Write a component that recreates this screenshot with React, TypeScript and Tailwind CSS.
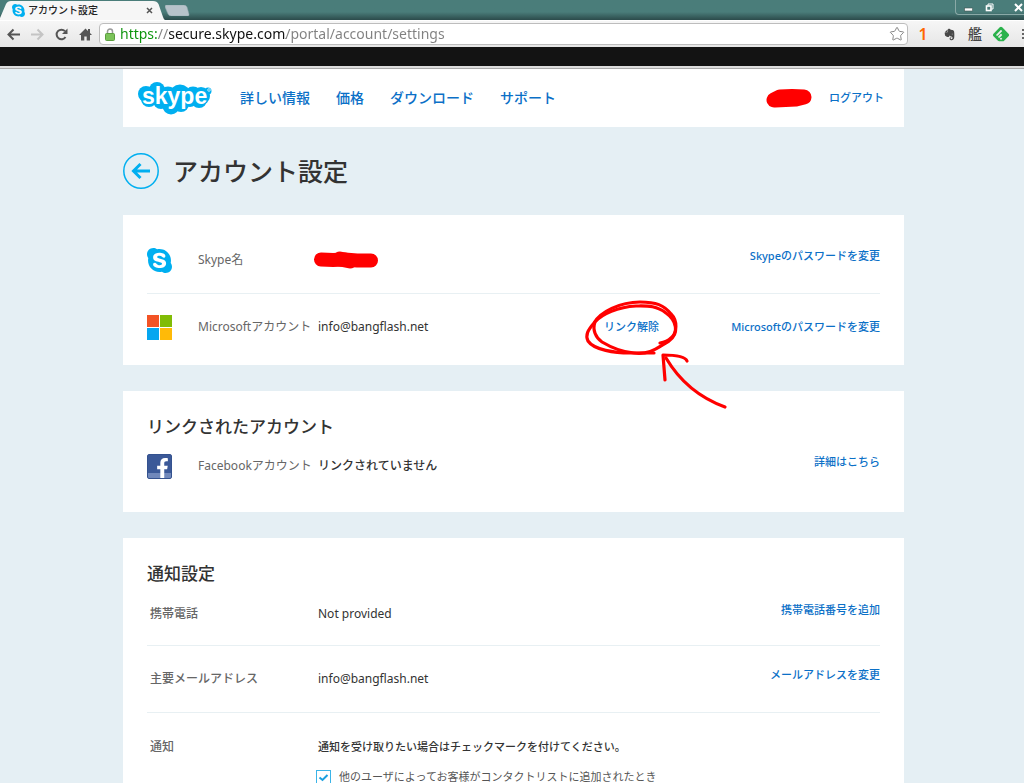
import React from "react";
import { FaSkype, FaFacebookF, FaEvernote } from "react-icons/fa";
import { SiFeedly } from "react-icons/si";
import { Star } from "lucide-react";

function BrowserTabs() {
  return (
    <div className="flex h-5 shrink-0 items-start bg-linear-to-b from-[#4a7d7a] from-60% to-[#2c4b4b]">
      <div className="relative flex h-5 w-[165px] items-center pr-3 pl-3">
        <svg className="absolute inset-0" width="165" height="20" viewBox="0 0 165 20" aria-hidden="true">
          <path d="M0 20V18L6 4Q7.500 1 11 1H153Q157 1 158.500 4L163 17Q164 20 165 20Z" fill="#f6f6f6" />
        </svg>
        <FaSkype className="relative h-[15px] w-[13px] text-[#00aff0]" />
        <span className="relative ml-[3px] grow text-[10px] leading-4 font-medium text-[#222]">アカウント設定</span>
        <button type="button" aria-label="閉じる" className="relative">
          <svg width="7" height="7" viewBox="0 0 7 7" stroke="#555" strokeWidth="1.500">
            <path d="M1 1l5 5M6 1L1 6" />
          </svg>
        </button>
      </div>
      <button type="button" aria-label="新しいタブ" className="mt-[5px]">
        <svg width="25" height="11" viewBox="0 0 25 11">
          <path d="M1 0H19Q21 0 22 2L24 9Q24.500 11 23 11H6Q4 11 3 9L0 2Q0 0 1 0Z" fill="#b7c3ca" stroke="#8fa5aa" strokeWidth=".5" />
        </svg>
      </button>
      <div className="ml-auto flex h-[15px] w-[69px] items-center gap-3 rounded-bl border-b border-l border-[#8aa9a7] pr-px pl-2">
        <button type="button" aria-label="最小化">
          <svg width="9" height="9" viewBox="0 0 9 9">
            <rect x=".5" y="5" width="8" height="3" fill="#fff" stroke="#405553" strokeWidth=".6" />
          </svg>
        </button>
        <button type="button" aria-label="元に戻す">
          <svg width="9" height="9" viewBox="0 0 9 9" fill="none" stroke="#fff" strokeWidth="1.600">
            <path d="M3 2.500V1H8V6H6.500" strokeWidth="1" />
            <rect x="1.500" y="3" width="4.500" height="4.500" />
          </svg>
        </button>
        <button type="button" aria-label="ウィンドウを閉じる" className="ml-auto">
          <svg width="9" height="9" viewBox="0 0 9 9" stroke="#fff" strokeWidth="2">
            <path d="M1 1l7 7M8 1L1 8" />
          </svg>
        </button>
      </div>
    </div>
  );
}

function BrowserToolbar() {
  return (
    <div className="flex h-[27px] shrink-0 items-center overflow-hidden border-t border-white bg-linear-to-b from-[#f6f6f6] to-[#e6e6e6] pl-[7px]">
      <div className="flex shrink-0 gap-[11px] pr-[7px] text-[#555]">
        <button type="button" aria-label="戻る">
          <svg width="13" height="13" viewBox="0 0 13 13" fill="none" stroke="currentColor" strokeWidth="2">
            <path d="M13 6.500H2M6.500 1.500L1.500 6.500L6.500 11.500" />
          </svg>
        </button>
        <button type="button" aria-label="進む" className="text-[#c4c4c4]">
          <svg width="13" height="13" viewBox="0 0 13 13" fill="none" stroke="currentColor" strokeWidth="2">
            <path d="M0 6.500H11M6.500 1.500L11.500 6.500L6.500 11.500" />
          </svg>
        </button>
        <button type="button" aria-label="再読み込み">
          <svg width="13" height="13" viewBox="0 0 13 13">
            <path d="M10.500 9A4.800 4.800 0 1 1 10 3.200" fill="none" stroke="currentColor" strokeWidth="2" />
            <path d="M12.500 .5V6H7Z" fill="currentColor" />
          </svg>
        </button>
        <button type="button" aria-label="ホーム">
          <svg width="13" height="13" viewBox="0 0 13 13" fill="currentColor">
            <path d="M6.500 .5L0 7H2V12.500H5.300V8.500H7.700V12.500H11V7H13L11 5V1H9V3Z" />
          </svg>
        </button>
      </div>
      <div className="flex h-[22px] min-w-0 grow items-center rounded-sm border border-[#bdbdbd] bg-white pr-[2px] pl-[5px]">
        <svg width="10" height="13" viewBox="0 0 10 13" aria-hidden="true">
          <path d="M2.500 6V3.500a2.500 2.500 0 0 1 5 0V6" fill="none" stroke="#9a9a9a" strokeWidth="1.500" />
          <rect x=".5" y="5.500" width="9" height="7" rx="1" fill="#7cc35a" stroke="#5b9e3f" />
        </svg>
        <input
          type="text"
          aria-label="アドレス"
          defaultValue="https://secure.skype.com/portal/account/settings"
          className="ml-[5px] min-w-0 grow bg-[linear-gradient(90deg,#0a930a_37px,#808080_37px,#808080_49px,#111_49px,#111_166px,#808080_166px)] bg-clip-text text-sm leading-5 text-transparent outline-none"
        />
        <button type="button" aria-label="ブックマーク">
          <Star className="h-4 w-4 text-[#888]" strokeWidth={1.5} />
        </button>
      </div>
      <div className="flex shrink-0 items-center gap-[10px] pl-[7px]">
        <button type="button" className="w-4 text-base leading-5 font-semibold text-[#f60]">1</button>
        <button type="button" aria-label="Evernote" className="flex w-4 justify-center text-[#484848]">
          <FaEvernote className="h-[13px] w-[13px]" />
        </button>
        <button type="button" className="w-4 text-sm leading-5 font-medium text-[#444]">艦</button>
        <button type="button" aria-label="feedly" className="flex w-4 justify-center text-[#2bb24c]">
          <SiFeedly className="h-4 w-4" />
        </button>
        <button type="button" aria-label="メニュー" className="w-[5px] overflow-hidden">
          <svg width="12" height="11" viewBox="0 0 12 11" fill="#666">
            <path d="M3 0H12V2H3ZM3 4H12V6H3ZM3 8H12V10H3Z" />
          </svg>
        </button>
      </div>
    </div>
  );
}

function SkypeLogo() {
  return (
    <svg width="75" height="33" viewBox="0 0 75 33" role="img" aria-label="skype">
      <g fill="#00aff0">
        <circle cx="9" cy="12" r="8" />
        <circle cx="12" cy="17" r="8" />
        <circle cx="20" cy="8" r="8" />
        <circle cx="31" cy="13" r="8.500" />
        <circle cx="43" cy="13" r="10.500" />
        <circle cx="56" cy="13" r="8.500" />
        <circle cx="64" cy="14" r="9" />
        <circle cx="62" cy="18" r="8" />
        <circle cx="24" cy="19" r="8" />
        <circle cx="34" cy="24" r="8.500" />
        <circle cx="44" cy="22" r="8" />
        <circle cx="53" cy="18" r="7" />
        <circle cx="71" cy="9" r="3.500" />
      </g>
      <text x="5" y="22" fill="#fff" fontFamily="Liberation Sans, sans-serif" fontSize="23" fontWeight="700">skype</text>
      <circle cx="72" cy="8" r="1.300" fill="none" stroke="#fff" strokeWidth=".7" />
    </svg>
  );
}

function SiteHeader() {
  return (
    <header className="flex h-[58px] items-center bg-white pr-5 pl-[14px] text-[#0b70c7]">
      <a href="#home"><SkypeLogo /></a>
      <nav className="ml-7 flex gap-[26px] text-sm leading-6 font-medium">
        <a href="#learn">詳しい情報</a>
        <a href="#prices">価格</a>
        <a href="#download">ダウンロード</a>
        <a href="#support">サポート</a>
      </nav>
      <div className="ml-auto flex items-center gap-4">
        <svg width="48" height="20" viewBox="0 0 48 20" aria-hidden="true">
          <path d="M9 12L15 9L27 8.500L39 9L31 11L10 12" fill="none" stroke="#f00" strokeWidth="15" strokeLinecap="round" strokeLinejoin="round" />
        </svg>
        <a href="#logout" className="text-[11px] leading-4 font-medium">ログアウト</a>
      </div>
    </header>
  );
}

function MicrosoftLogo() {
  return (
    <svg width="25" height="25" viewBox="0 0 25 25" aria-hidden="true">
      <rect width="12" height="12" fill="#f35325" />
      <rect x="13" width="12" height="12" fill="#81bc06" />
      <rect y="13" width="12" height="12" fill="#05a6f0" />
      <rect x="13" y="13" width="12" height="12" fill="#ffba08" />
    </svg>
  );
}

function FacebookLogo() {
  return (
    <div className="flex h-[25px] w-[25px] items-end justify-end rounded-xs border border-[#34528f] bg-linear-to-b from-[#3b5998] from-80% to-[#7088bb] to-80% pr-[2px] text-white">
      <FaFacebookF className="h-5 w-[13px]" />
    </div>
  );
}

// Hand-drawn ring and arrow around the unlink action
function Scribble() {
  return (
    <svg
      className="pointer-events-none absolute -top-6 left-1/2 -ml-[52px] max-w-none"
      width="150"
      height="117"
      viewBox="580 295 150 117"
      fill="none"
      stroke="#f00"
      strokeWidth="3.200"
      strokeLinecap="round"
      strokeLinejoin="round"
      aria-hidden="true"
    >
      <path d="M660 343Q667 342 671 338C677 333 678 321 671 314C664 305 656 302 640 302C620 302 600 312 594 323C588 330 585 335 588 341C594 350 615 353 630 353L654 353" />
      <path d="M595 322C592 330 596 338 602 342C612 348 622 352 634 353C651 355 658 347 669 341C680 333 676 320 666 313C656 305 646 306 636 306C618 307 602 314 595 322" />
      <path d="M725 407C703 399 682 385 666 358" />
      <path d="M665 380L663 355C673 355 685 356 687 361" />
    </svg>
  );
}

interface RowProps {
  label: string;
  icon?: React.ReactNode;
  children?: React.ReactNode;
  action?: React.ReactNode;
  className: string;
}

function Row({ label, icon, children, action, className }: RowProps) {
  return (
    <div className={`flex items-center text-xs leading-5 ${className}`}>
      {icon && <div className="w-[51px] shrink-0">{icon}</div>}
      <div className={`shrink-0 text-[#666] ${icon ? "w-[120px]" : "w-[171px] pl-[3px] font-medium"}`}>
        {label}
      </div>
      <div className="grow text-[#333]">{children}</div>
      {action}
    </div>
  );
}

function ActionLink({ href, children }: { href: string; children: React.ReactNode }) {
  return (
    <a href={href} className="pb-2 text-[11px] leading-4 font-medium text-[#0b70c7]">
      {children}
    </a>
  );
}

export default function App() {
  return (
    <div
      lang="ja"
      className="flex h-screen flex-col overflow-hidden bg-[#e5eff4] font-['Noto_Sans','Noto_Sans_CJK_JP',sans-serif]"
    >
      <BrowserTabs />
      <BrowserToolbar />
      <div className="h-[19px] shrink-0 bg-[#131313]" />
      <div className="h-[3px] shrink-0 border-b border-[#aaa] bg-[#ddd]" />

      <div className="min-h-0 grow overflow-hidden pl-[3px]">
        <div className="mx-auto max-w-[781px]">
          <SiteHeader />

          <div className="flex items-center gap-[14px] pt-[26px] pb-[26px]">
            <a href="#back" aria-label="戻る">
              <svg width="36" height="36" viewBox="0 0 36 36" fill="none" stroke="#00aff0">
                <circle cx="18" cy="18" r="17.200" strokeWidth="1.500" />
                <path d="M27 18H11M17.500 11L10.500 18L17.500 25" strokeWidth="3" />
              </svg>
            </a>
            <h1 className="text-[25px] leading-9 font-medium text-[#333]">アカウント設定</h1>
          </div>

          <main className="flex flex-col gap-[26px]">
            <section className="bg-white px-6 pt-3 pb-[5px]">
              <Row
                className="h-[67px] border-b border-[#e8f0f3]"
                icon={<FaSkype className="h-[29px] w-[25px] text-[#00aff0]" />}
                label="Skype名"
                action={<ActionLink href="#skype-password">Skypeのパスワードを変更</ActionLink>}
              >
                <svg className="-ml-[5px]" width="66" height="18" viewBox="0 0 66 18" aria-hidden="true">
                  <path d="M8 8.500L20 9L32 8.500L44 9.500L58 9.500" fill="none" stroke="#f00" strokeWidth="14" strokeLinecap="round" />
                  <path d="M27 8L37 10" fill="none" stroke="#f00" strokeWidth="15" strokeLinecap="round" />
                </svg>
              </Row>
              <Row
                className="h-[66px]"
                icon={<MicrosoftLogo />}
                label="Microsoftアカウント"
                action={
                  <div className="flex items-center text-[11px] leading-4 font-medium text-[#0b70c7]">
                    <div className="relative">
                      <a href="#unlink">リンク解除</a>
                      <Scribble />
                    </div>
                    <a href="#microsoft-password" className="w-[221px] text-right">Microsoftのパスワードを変更</a>
                  </div>
                }
              >
                info@bangflash.net
              </Row>
            </section>

            <section className="bg-white px-6 pt-6 pb-[19px]">
              <h2 className="text-[17px] leading-6 font-medium text-[#333]">リンクされたアカウント</h2>
              <Row
                className="h-[54px]"
                icon={<FacebookLogo />}
                label="Facebookアカウント"
                action={<ActionLink href="#details">詳細はこちら</ActionLink>}
              >
                <span className="font-medium">リンクされていません</span>
              </Row>
            </section>

            <section className="bg-white px-6 pt-6 pb-6">
              <h2 className="text-[17px] leading-6 font-medium text-[#333]">通知設定</h2>
              <Row
                className="h-[60px] border-b border-[#e8f0f3] pb-1"
                label="携帯電話"
                action={<ActionLink href="#add-phone">携帯電話番号を追加</ActionLink>}
              >
                Not provided
              </Row>
              <Row
                className="h-[67px] border-b border-[#e8f0f3]"
                label="主要メールアドレス"
                action={<ActionLink href="#change-mail">メールアドレスを変更</ActionLink>}
              >
                info@bangflash.net
              </Row>
              <Row className="h-[56px] pt-3" label="通知">
                <span className="text-[11px] font-medium">
                  通知を受け取りたい場合はチェックマークを付けてください。
                </span>
              </Row>
              <label className="flex items-center gap-2 pl-[169px] text-[11px] leading-4 text-[#555]">
                <span className="relative flex h-[15px] w-[15px]">
                  <input
                    type="checkbox"
                    defaultChecked
                    className="peer h-[15px] w-[15px] appearance-none border border-[#3bb4e8] bg-white"
                  />
                  <svg
                    className="pointer-events-none absolute inset-0 hidden peer-checked:block"
                    width="15"
                    height="15"
                    viewBox="0 0 15 15"
                    fill="none"
                    stroke="#1ba0e0"
                    strokeWidth="2"
                  >
                    <path d="M3.500 7.500L6.500 10L11.500 5" />
                  </svg>
                </span>
                他のユーザによってお客様がコンタクトリストに追加されたとき
              </label>
            </section>
          </main>
        </div>
      </div>
    </div>
  );
}
